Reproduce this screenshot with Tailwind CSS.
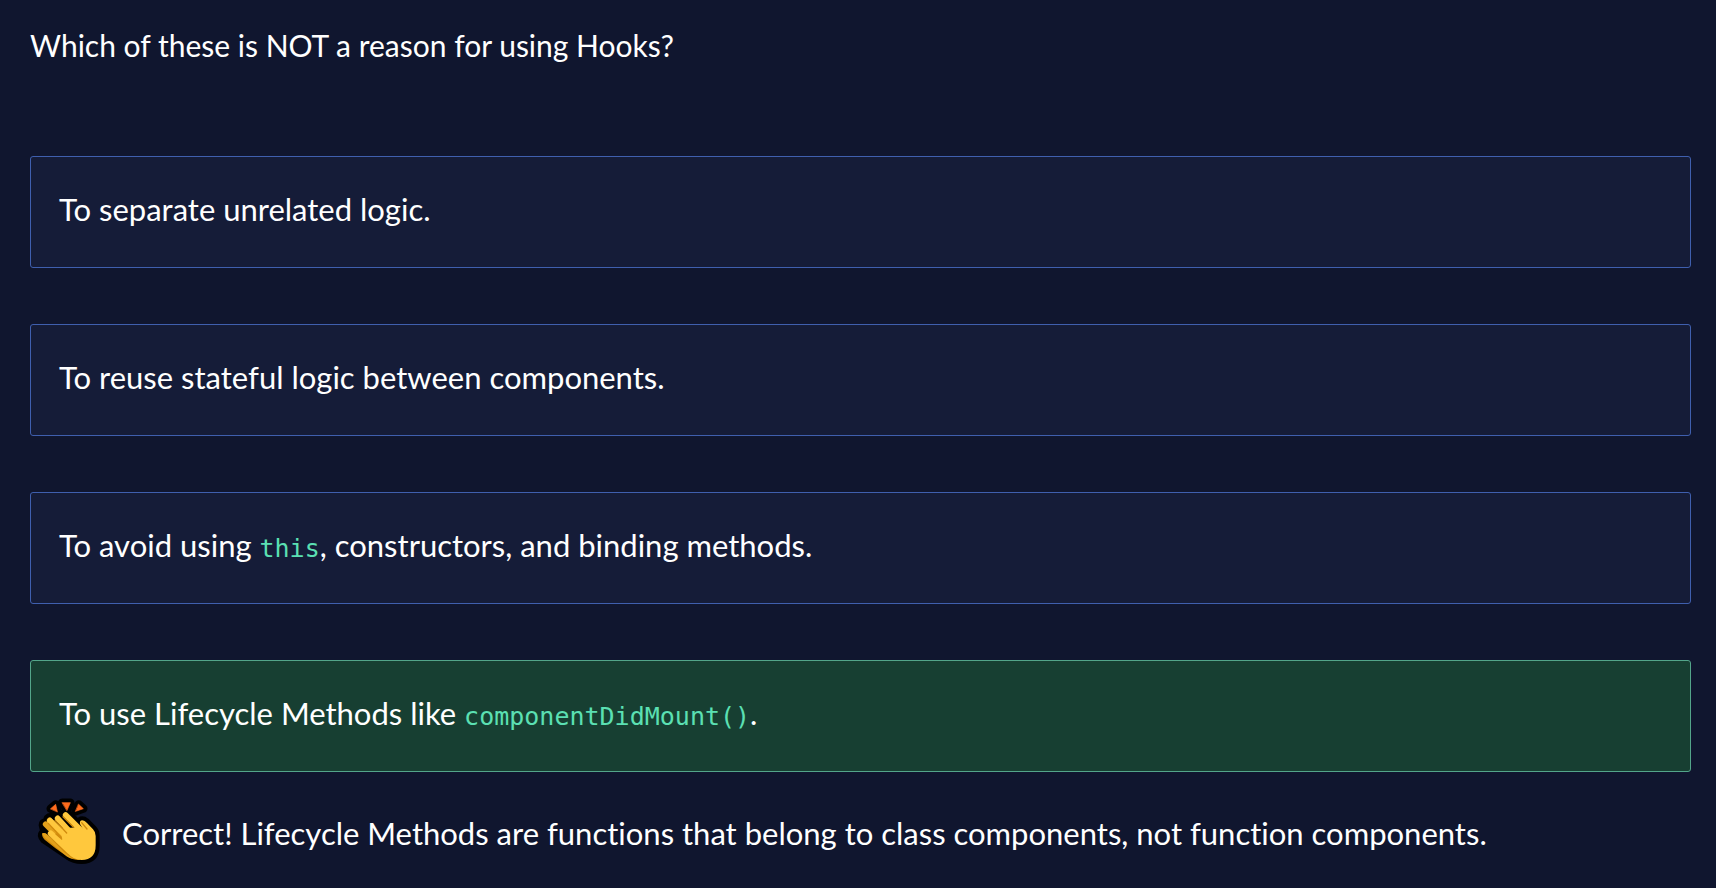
<!DOCTYPE html>
<html lang="en">
<head>
<meta charset="utf-8">
<meta name="viewport" content="width=device-width, initial-scale=1">
<title>Hooks quiz</title>
<script src="https://cdn.jsdelivr.net/npm/@tailwindcss/browser@4"></script>
</head>
<body class="min-h-screen bg-[#10162f] font-['Lato','Open_Sans',sans-serif] text-[31px] leading-12 text-white [font-variant-ligatures:none]">
<main class="pt-[21px] pr-[25px] pl-[30px]">
  <h1 id="question" class="text-[30px]">Which of these is NOT a reason for using Hooks?</h1>
  <div role="group" aria-labelledby="question" class="mt-[87px] flex flex-col gap-14">
    <button type="button" class="w-full rounded-[3px] border border-[#3f5fae] bg-[#151c38] px-7 pt-7 pb-[34px] text-left">To separate unrelated logic.</button>
    <button type="button" class="w-full rounded-[3px] border border-[#3f5fae] bg-[#151c38] px-7 pt-7 pb-[34px] text-left">To reuse stateful logic between components.</button>
    <button type="button" class="w-full rounded-[3px] border border-[#3f5fae] bg-[#151c38] px-7 pt-7 pb-[34px] text-left">To avoid using <code class="font-['DejaVu_Sans_Mono',monospace] text-[25px] leading-none text-[#5be0b3]">this</code>, constructors, and binding methods.</button>
    <button type="button" aria-pressed="true" class="w-full rounded-[3px] border border-[#53a58a] bg-[#173f32] px-7 pt-7 pb-[34px] text-left">To use Lifecycle Methods like <code class="font-['DejaVu_Sans_Mono',monospace] text-[25px] leading-none text-[#5be0b3]">componentDidMount()</code>.</button>
  </div>
  <div role="status" class="mt-[18px] flex items-center">
    <svg class="h-[85px] w-20 shrink-0" viewBox="0 0 240 255" aria-hidden="true" stroke-linecap="round" stroke-linejoin="round">
      <!-- outline -->
      <g stroke="#000" fill="#000">
        <path stroke-width="25" d="M62 56 77 43 82 65zM97 38h24l-10 23zM146 43l14 13-23 8z"/>
        <path stroke-width="24" d="M99 70q7-7 14 0l35 35 5-14q7-2 14 4l22 22q8 8 8 20v29q0 44-42 44-24 0-40-12L42 148q-10-12-4-19l5-4-5-20q0-8 12-9l3-11q6-6 14-2l8-7z"/>
      </g>
      <path fill="#ff6c1d" stroke="#ff6c1d" stroke-width="2" d="M62 56 77 43 82 65zM97 38h24l-10 23zM146 43l14 13-23 8z"/>
      <!-- back hand -->
      <g stroke="#e3a11b" stroke-width="17" fill="none"><path d="m47 103 45 45M59 91l35 40"/></g>
      <path fill="#cf8a0b" d="M37 130q8-3 17 5l70 55 28 20q-24 1-42-11Q77 176 44 149q-10-10-7-19z"/>
      <path fill="#e3a11b" d="M37 130q8-3 15 4l50 52 28 21q-12-2-20-8Q77 170 44 143q-8-7-7-13z"/>
      <!-- front hand -->
      <g stroke="#ffc83d" stroke-width="17" fill="none"><path d="m107 75 45 45M83 85l50 55M60 92l60 58M62 130l55 52"/></g>
      <path fill="#ffc83d" d="m95 115 56-3 8 6-9-16q-2-10 7-11 7 0 14 8l18 19q8 8 8 20v28q0 44-42 44-25 0-42-20l-35-38 17-12z"/>
      <g fill="none" stroke="#d18b0d" stroke-width="4"><path d="m99 80 31 31M75 91l35 38M55 100l39 43M78 132l17 15M155 98l16 19"/></g>
    </svg>
    <p class="ml-3">Correct! Lifecycle Methods are functions that belong to class components, not function components.</p>
  </div>
</main>
</body>
</html>
